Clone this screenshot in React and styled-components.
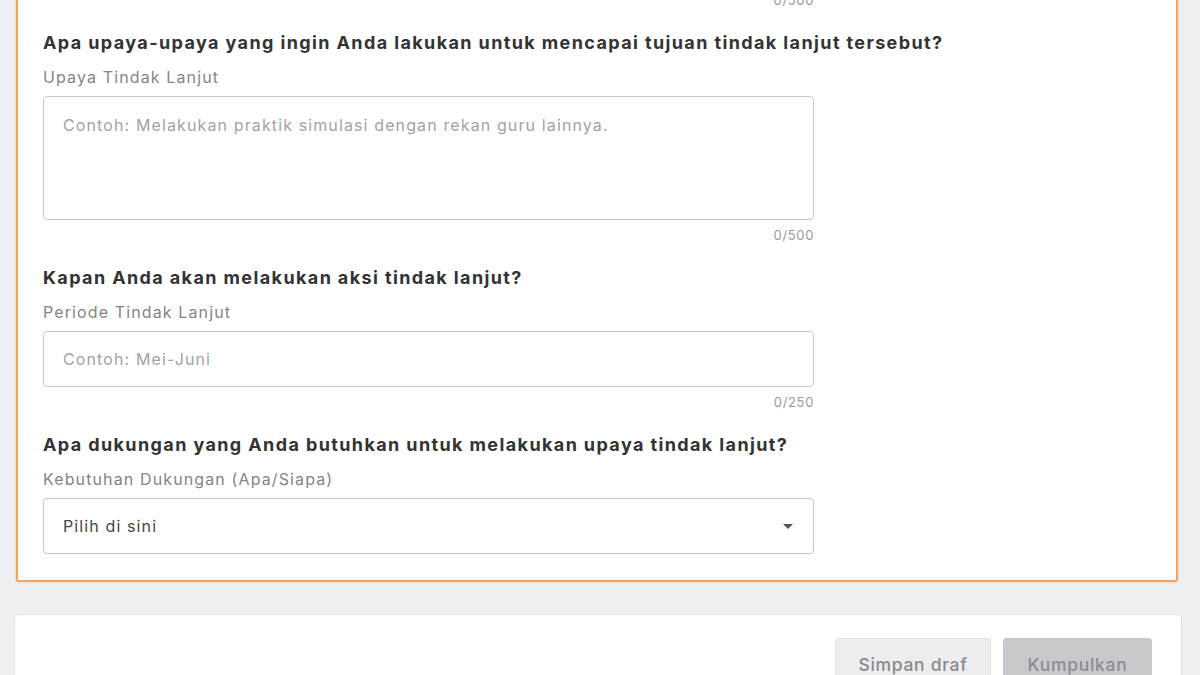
import React from 'react';
import styled, { createGlobalStyle } from 'styled-components';

const GlobalStyle = createGlobalStyle`
  html, body {
    margin: 0;
    padding: 0;
    background: #eef0f3;
    font-family: Inter, "Noto Sans", "Liberation Sans", sans-serif;
    color: #333;
    overflow: hidden;
  }
  * { box-sizing: border-box; }
`;

const Page = styled.div`
  margin-top: -230px;
  padding: 0 18px 0 14px;
  display: flex;
  flex-direction: column;
  gap: 32px;
`;

const FormCard = styled.section`
  margin: 0 4px 0 2px;
  background: #fff;
  border: 2px solid #f2a468;
  border-radius: 3px;
  box-shadow: 0 0 3px rgba(240, 150, 90, 0.45);
  padding: 24px 25px 26px;
  display: flex;
  flex-direction: column;
  gap: 22px;
`;

const Field = styled.div`
  display: flex;
  flex-direction: column;
  width: 771px;
`;

const Question = styled.h3`
  margin: 0 0 12px;
  width: 1100px;
  font-size: 18px;
  line-height: 24px;
  font-weight: 700;
  letter-spacing: 0.077em;
  color: #333;
`;

const Label = styled.label`
  margin-bottom: 9px;
  font-size: 16px;
  line-height: 20px;
  letter-spacing: 0.07em;
  color: #858585;
`;

const TextArea = styled.textarea`
  width: 100%;
  height: ${(p) => p.$height}px;
  resize: none;
  border: 1.5px solid #c9c9c9;
  border-radius: 4px;
  padding: ${(p) => (p.$height > 60 ? '17px 19px' : '16px 19px')};
  font-family: inherit;
  font-size: 16px;
  line-height: 22px;
  letter-spacing: 0.07em;
  color: #333;
  background: #fff;
  outline: none;

  &::placeholder {
    color: #a3a3a3;
  }
`;

const Counter = styled.div`
  margin-top: 6px;
  text-align: right;
  font-size: 13px;
  line-height: 18px;
  letter-spacing: 0.05em;
  color: #9a9a9a;
`;

const Select = styled.button`
  width: 100%;
  height: 56px;
  display: flex;
  align-items: center;
  justify-content: space-between;
  padding: 0 20px 0 19px;
  border: 1.5px solid #c9c9c9;
  border-radius: 4px;
  background: #fff;
  font-family: inherit;
  font-size: 16px;
  letter-spacing: 0.07em;
  color: #454545;
  cursor: pointer;
`;

const Caret = styled.span`
  width: 0;
  height: 0;
  border-left: 5px solid transparent;
  border-right: 5px solid transparent;
  border-top: 5px solid #555;
`;

const Footer = styled.footer`
  background: #fff;
  border: 1px solid #e2e3e6;
  border-radius: 4px;
  padding: 23px 29px 20px;
  display: flex;
  justify-content: flex-end;
  gap: 12px;
`;

const Button = styled.button`
  height: 52px;
  padding: 0;
  width: ${(p) => p.$width}px;
  border-radius: 3px;
  border: 1px solid ${(p) => (p.$primary ? '#c6c7cb' : '#e1e2e5')};
  background: ${(p) => (p.$primary ? '#c8c9cd' : '#ededef')};
  color: ${(p) => (p.$primary ? '#8c8d91' : '#8a8a8c')};
  font-family: inherit;
  font-size: 17.5px;
  font-weight: 500;
  letter-spacing: 0.04em;
  cursor: default;
`;

const fields = [
  {
    question: 'Apa tujuan tindak lanjut yang ingin Anda capai?',
    label: 'Tujuan Tindak Lanjut',
    placeholder: '',
    height: 124,
    max: 500,
  },
  {
    question: 'Apa upaya-upaya yang ingin Anda lakukan untuk mencapai tujuan tindak lanjut tersebut?',
    label: 'Upaya Tindak Lanjut',
    placeholder: 'Contoh: Melakukan praktik simulasi dengan rekan guru lainnya.',
    height: 124,
    max: 500,
  },
  {
    question: 'Kapan Anda akan melakukan aksi tindak lanjut?',
    label: 'Periode Tindak Lanjut',
    placeholder: 'Contoh: Mei-Juni',
    height: 56,
    max: 250,
  },
];

const App = () => (
  <>
    <GlobalStyle />
    <Page>
      <FormCard>
        {fields.map((f) => (
          <Field key={f.label}>
            <Question>{f.question}</Question>
            <Label>{f.label}</Label>
            <TextArea $height={f.height} placeholder={f.placeholder} />
            <Counter>0/{f.max}</Counter>
          </Field>
        ))}
        <Field>
          <Question>Apa dukungan yang Anda butuhkan untuk melakukan upaya tindak lanjut?</Question>
          <Label>Kebutuhan Dukungan (Apa/Siapa)</Label>
          <Select type="button">
            Pilih di sini
            <Caret />
          </Select>
        </Field>
      </FormCard>

      <Footer>
        <Button $width={156}>Simpan draf</Button>
        <Button $primary $width={149}>Kumpulkan</Button>
      </Footer>
    </Page>
  </>
);

export default App;
